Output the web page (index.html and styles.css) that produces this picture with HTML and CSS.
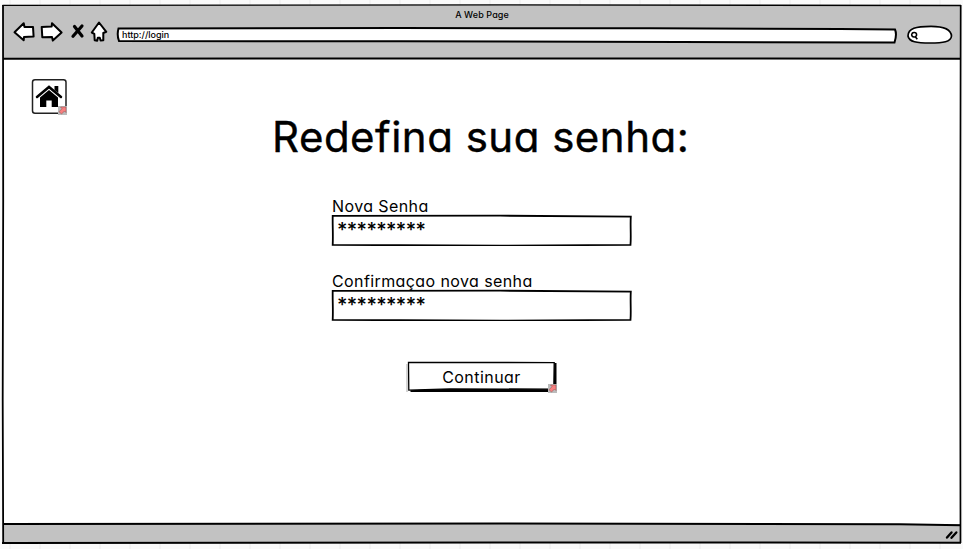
FILE: index.html
```html
<!DOCTYPE html>
<html lang="pt">
<head>
<meta charset="utf-8">
<title>A Web Page</title>
<link rel="stylesheet" href="styles.css">
</head>
<body>
<div class="window">
  <header class="chrome">
    <div class="window-title"><span>A Web Page</span></div>
    <div class="toolbar">
      <svg class="nav" width="96" height="24" viewBox="12 20 96 24">
        <g fill="#fff" stroke="#000" stroke-width="2" stroke-linejoin="round">
          <path d="M14.500 32.300 23.700 23.300l.8 3.700 8.500-.1.600 9.600-9.600.5-.3 3.200z"/>
          <path d="M41.700 27l10-.5.3-3.300 9.600 9.300-8.800 8.100-.8-3.700-9.700.3z"/>
          <path d="M99 22.500l7.300 9.300-3 1.200 0 7.300-2.700.2-.8-2.700-2 0-.6 2.900-2.500-.4-.4-6.500-2.500-1.300z"/>
        </g>
        <path d="M74.500 26.500l7.500 9.500M82 26l-9 10.300" fill="none" stroke="#000" stroke-width="3.200" stroke-linecap="round"/>
      </svg>
      <div class="address">
        <svg class="outline" width="782" height="18" viewBox="116 26 782 18"><path d="M118.500 28.500 400 28 650 28.300 840 29.100 895 29.500C896.500 33 896 38 894.500 42.500L400 41.300 119 41C117.500 37 117.500 32 118.500 28.500z" fill="#fff" stroke="#000" stroke-width="2"/></svg>
        <span>http://login</span>
      </div>
      <svg class="search" width="48" height="22" viewBox="906 24 48 22">
        <path d="M908 36C908 28 916 26.500 931 26.300 944 26.300 951 29 951.500 36 951 42 943 43 930 43 917 43 909 42 908 36z" fill="#fff" stroke="#000" stroke-width="1.700"/>
        <path d="M912 33.500c1-1.500 4-1.500 4.500.5s-1 3-2.500 3-3-1.500-2-3.500m3.300 3.200 2 2.500" fill="none" stroke="#000" stroke-width="1.600"/>
      </svg>
    </div>
  </header>
  <main class="page">
    <a class="home">
      <svg width="37" height="37" viewBox="30 78 37 37">
        <rect x="32.500" y="79.700" width="33.500" height="33.500" rx="2.500" fill="#fff" stroke="#222" stroke-width="1.500"/>
        <path d="M40 97.500 49 90l9 7.500V107h-6.300v-6.500h-5.400V107H40z"/>
        <path d="M37 97 49 87l12 10" fill="none" stroke="#000" stroke-width="2.500" stroke-linecap="round"/>
        <path d="M54.500 86h3.800v7l-3.800-3z"/>
      </svg>
      <svg class="link-mark" width="9" height="9" viewBox="0 0 9 9"><rect width="9" height="9" fill="#bbb"/><path d="M2.500 1H8v5.500L6.500 5 3.500 8 1 5.700 4 2.700z" fill="#f88080" stroke="#904848" stroke-width=".5"/></svg>
    </a>
    <h1><span>Redefina sua senha:</span></h1>
    <form class="form">
      <div class="field">
        <label class="new">Nova Senha</label>
        <div class="input">
          <svg class="outline" width="301" height="32" viewBox="331 214 301 32"><path d="M332.700 215.900 500 215.700 630.800 216.600C630.200 226 631.200 236 630.500 244.800L500 245.600 400 245.200 332.700 244.900C333.200 235 332.500 226 332.700 215.900z" fill="#fff" stroke="#000" stroke-width="1.800"/></svg>
          <span>*********</span>
        </div>
      </div>
      <div class="field">
        <label class="confirm">Confirmaçao nova senha</label>
        <div class="input">
          <svg class="outline" width="301" height="32" viewBox="331 214 301 32"><path d="M332.700 215.900 500 215.700 630.800 216.600C630.200 226 631.200 236 630.500 244.800L500 245.600 400 245.200 332.700 244.900C333.200 235 332.500 226 332.700 215.900z" fill="#fff" stroke="#000" stroke-width="1.800"/></svg>
          <span>*********</span>
        </div>
      </div>
      <div class="button">
        <svg class="outline" width="151" height="33" viewBox="406 361 151 33"><path d="M410.500 390.500H555V363" fill="none" stroke="#000" stroke-width="3"/><path d="M408.500 362.300 554.200 362.600 553.800 389.200 450 388.800 408.800 390.200z" fill="#fff" stroke="#000" stroke-width="1.300"/><path d="M407 364v28" stroke="#aaa" stroke-width="1"/></svg>
        <span>Continuar</span>
        <svg class="link-mark" width="9" height="9" viewBox="0 0 9 9"><rect width="9" height="9" fill="#bbb"/><path d="M2.500 1H8v5.500L6.500 5 3.500 8 1 5.700 4 2.700z" fill="#f88080" stroke="#904848" stroke-width=".5"/></svg>
      </div>
    </form>
  </main>
  <footer class="status">
    <svg width="14" height="11" viewBox="944 529 14 11"><path d="M947 537.500l4.500-5M951.500 537.800l4.800-5.300" stroke="#000" stroke-width="2.400" stroke-linecap="round"/></svg>
  </footer>
  <svg class="frame" width="963" height="549" viewBox="0 0 963 549"><g fill="none" stroke="#000">
    <path d="M2.500 5.400 500 4.900 961 5.500" stroke-width="1.300"/>
    <path d="M3 5 3.200 200 2.700 400 3.200 543" stroke-width="1.800"/>
    <path d="M960.700 5 960.200 300 960.500 543" stroke-width="1.700"/>
    <path d="M3 58.700 500 58.400 961 58.700" stroke-width="2"/>
    <path d="M3 524 500 523.500 900 524.200 961 525.300" stroke-width="1.900"/>
    <path d="M2 543 500 542.500 961 542.700" stroke-width="2"/>
  </g></svg>
</div>
</body>
</html>
```

FILE: styles.css
```css
* { box-sizing: border-box; }
body {
  margin: 0;
  height: 549px;
  overflow: hidden;
  color: #000;
  font-family: Inter, "Liberation Sans", sans-serif;
  font-feature-settings: "cv11", "ss03";
  background: repeating-linear-gradient(90deg, #fafafa 0 9px, #f3f3f3 9px 11px, #fafafa 11px 30px);
}
svg { display: block; }
.window {
  position: relative;
  display: flex;
  flex-direction: column;
  height: 549px;
  padding: 5px 2px 6px 3px;
}
.frame { position: absolute; left: 0; top: 0; pointer-events: none; }
.chrome { height: 54px; background: #c2c2c2; }
.window-title { height: 15px; padding-top: 4px; text-align: center; font-size: 9px; line-height: 12px; letter-spacing: .1px; font-weight: 500; }
.toolbar { display: flex; align-items: flex-start; padding-left: 9px; }
.nav { margin-right: 8px; }
.address { position: relative; width: 782px; height: 18px; margin-top: 6px; padding: 2px 0 0 6px; font-size: 9px; line-height: 14px; font-weight: 500; letter-spacing: 0; }
.outline { position: absolute; left: 0; top: 0; }
.address span, .input span, .button span { position: relative; }
.search { margin: 4px 0 0 8px; }
.page { flex: none; height: 465px; background: #fff; padding: 19px 0 0 27px; }
.home { display: block; position: relative; width: 37px; height: 37px; }
.link-mark { position: absolute; right: 0; bottom: 0; }
h1 { margin: -1px 0 0 242px; font-size: 42px; line-height: 46px; font-weight: 400; letter-spacing: .5px; white-space: nowrap; -webkit-text-stroke: .4px #000; }
.form { width: 301px; margin: 36px 0 0 301px; }
.field { height: 75px; }
label { display: block; height: 18px; margin-left: 1px; font-size: 16px; line-height: 20px; white-space: nowrap; letter-spacing: .4px; }
.input { position: relative; width: 301px; height: 32px; padding: 4px 0 0 6px; font-size: 20px; line-height: 24px; font-weight: 500; letter-spacing: -.6px; }
.button { position: relative; width: 151px; height: 32px; margin: 15px 0 0 75px; text-align: center; font-size: 16px; line-height: 32px; letter-spacing: .45px; }
.status { flex: none; height: 19px; display: flex; justify-content: flex-end; padding: 5px 3px 0 0; background: #c2c2c2; }
```
